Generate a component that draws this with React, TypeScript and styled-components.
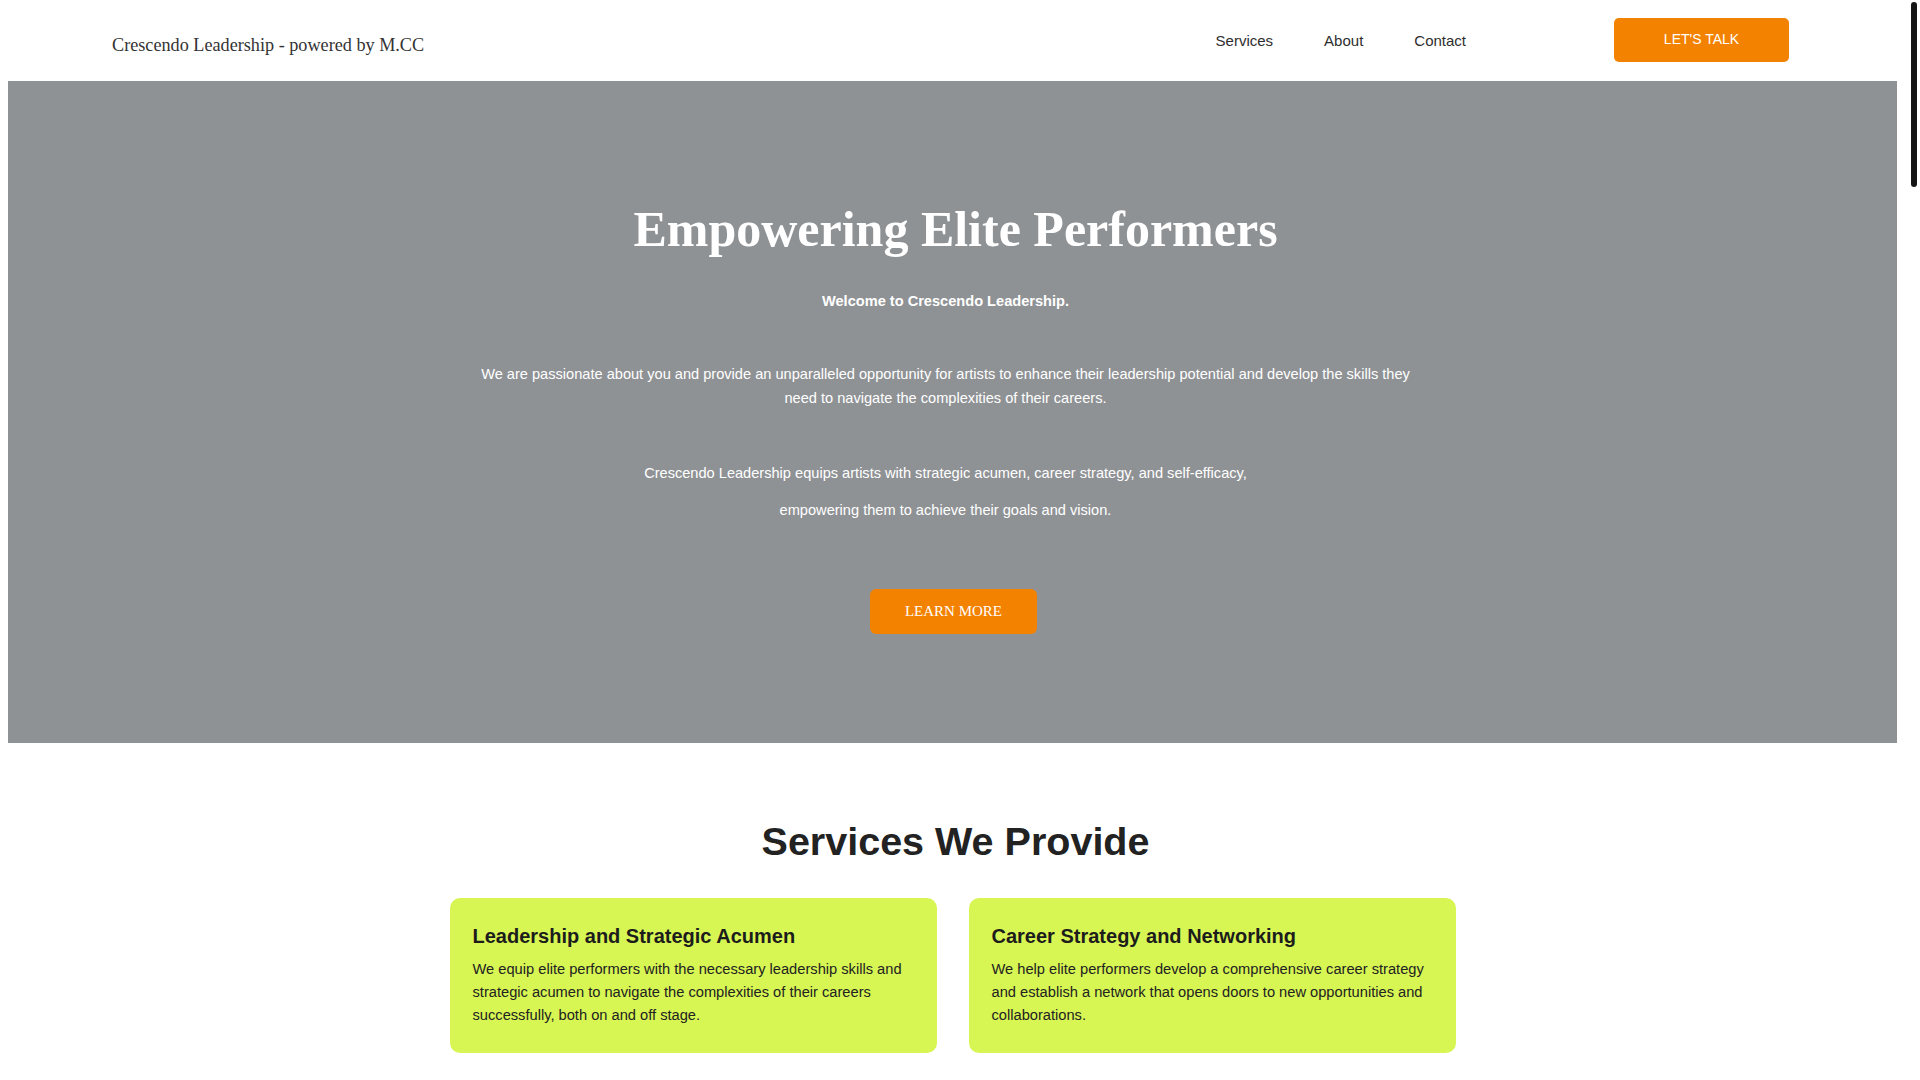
import styled, { createGlobalStyle } from "styled-components";

const GlobalStyle = createGlobalStyle`
  html, body {
    background: #ffffff;
  }
  body {
    margin: 8px 23px 8px 8px;
    font-family: "Liberation Sans", Arial, sans-serif;
    color: #333;
  }
`;

// stand-in for the browser scrollbar seen in the screenshot
const ScrollTrack = styled.div`
  position: fixed;
  top: 0;
  right: 0;
  width: 15px;
  height: 100vh;
  background: #ffffff;
`;

const ScrollThumb = styled.div`
  position: absolute;
  top: 2px;
  left: 6px;
  width: 6px;
  height: 185px;
  border-radius: 3px;
  background: #141414;
`;

const Header = styled.header`
  display: flex;
  align-items: center;
  justify-content: space-between;
  height: 73px;
  padding: 0 108px 0 104px;
`;

const Brand = styled.a`
  font-family: "Liberation Serif", "Times New Roman", serif;
  font-size: 18.2px;
  color: #333;
  text-decoration: none;
  margin-top: 1px;
`;

const RightGroup = styled.div`
  display: flex;
  align-items: center;
  padding-bottom: 9px;
`;

const Nav = styled.nav`
  display: flex;
  align-items: center;
  gap: 51px;
  margin-right: 148px;
`;

const NavLink = styled.a`
  font-size: 15px;
  color: #2e2e2e;
  text-decoration: none;
`;

const TalkButton = styled.a`
  display: flex;
  align-items: center;
  justify-content: center;
  width: 175px;
  height: 44px;
  padding-bottom: 2px;
  box-sizing: border-box;
  background: #f38200;
  border-radius: 5px;
  color: #ffffff;
  font-size: 14px;
  text-decoration: none;
  text-transform: uppercase;
`;

const Hero = styled.section`
  background: #8f9295;
  height: 662px;
  box-sizing: border-box;
  margin-right: -5px;
  padding: 120px 5px 0 0;
  display: flex;
  flex-direction: column;
  align-items: center;
`;

const HeroTitle = styled.h1`
  margin: 0;
  font-family: "Liberation Serif", "Times New Roman", serif;
  font-size: 50px;
  line-height: 1.15;
  font-weight: 700;
  color: #ffffff;
  padding-left: 6px;
`;

const HeroText = styled.div`
  width: 940px;
  padding-right: 14px;
  margin-top: 31px;
  text-align: center;
  color: #ffffff;
  font-size: 14.6px;
  line-height: 23.47px;
`;

const HeroPara = styled.p<{ $gap?: number; $bold?: boolean }>`
  margin: ${(p) => p.$gap ?? 0}px 0 0;
  font-weight: ${(p) => (p.$bold ? 700 : 400)};
`;

const LearnButton = styled.a`
  display: flex;
  align-items: center;
  justify-content: center;
  height: 45px;
  padding: 0 35px;
  margin: 66px 0 0 2px;
  box-sizing: border-box;
  background: #f38200;
  border-radius: 6px;
  color: #ffffff;
  font-family: "Liberation Serif", "Times New Roman", serif;
  font-size: 15px;
  text-decoration: none;
`;

const Services = styled.section`
  padding-top: 76px;
  display: flex;
  flex-direction: column;
  align-items: center;
`;

const SectionTitle = styled.h2`
  margin: 0;
  font-size: 39.5px;
  line-height: 1.15;
  font-weight: 700;
  color: #222;
  padding-left: 6px;
`;

const CardGrid = styled.div`
  display: grid;
  grid-template-columns: repeat(2, 487px);
  gap: 32px;
  margin-top: 34px;
`;

const Card = styled.div`
  background: #d7f553;
  border-radius: 10px;
  padding: 27px 23px 26px;
`;

const CardTitle = styled.h3`
  margin: 0 0 10px;
  font-size: 20px;
  line-height: 23px;
  font-weight: 700;
  color: #1c1c1c;
`;

const CardText = styled.p`
  margin: 0;
  font-size: 14.667px;
  line-height: 22.7px;
  color: #222;
`;

const services = [
  {
    title: "Leadership and Strategic Acumen",
    text: "We equip elite performers with the necessary leadership skills and strategic acumen to navigate the complexities of their careers successfully, both on and off stage.",
  },
  {
    title: "Career Strategy and Networking",
    text: "We help elite performers develop a comprehensive career strategy and establish a network that opens doors to new opportunities and collaborations.",
  },
];

export default function App() {
  return (
    <>
      <GlobalStyle />
      <Header>
        <Brand href="#">Crescendo Leadership - powered by M.CC</Brand>
        <RightGroup>
          <Nav>
            <NavLink href="#">Services</NavLink>
            <NavLink href="#">About</NavLink>
            <NavLink href="#">Contact</NavLink>
          </Nav>
          <TalkButton href="#">Let's Talk</TalkButton>
        </RightGroup>
      </Header>

      <Hero>
        <HeroTitle>Empowering Elite Performers</HeroTitle>
        <HeroText>
          <HeroPara $bold>Welcome to Crescendo Leadership.</HeroPara>
          <HeroPara $gap={50.5}>
            We are passionate about you and provide an unparalleled opportunity for artists to enhance
            their leadership potential and develop the skills they need to navigate the complexities of
            their careers.
          </HeroPara>
          <HeroPara $gap={51.3}>
            Crescendo Leadership equips artists with strategic acumen, career strategy, and self-efficacy,
          </HeroPara>
          <HeroPara $gap={14}>empowering them to achieve their goals and vision.</HeroPara>
        </HeroText>
        <LearnButton href="#">LEARN MORE</LearnButton>
      </Hero>

      <Services>
        <SectionTitle>Services We Provide</SectionTitle>
        <CardGrid>
          {services.map((s) => (
            <Card key={s.title}>
              <CardTitle>{s.title}</CardTitle>
              <CardText>{s.text}</CardText>
            </Card>
          ))}
        </CardGrid>
      </Services>

      <ScrollTrack>
        <ScrollThumb />
      </ScrollTrack>
    </>
  );
}
